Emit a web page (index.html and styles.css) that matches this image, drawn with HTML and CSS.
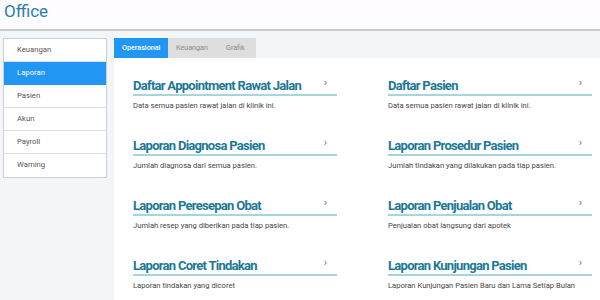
FILE: index.html
```html
<!DOCTYPE html>
<html>
<head>
<meta charset="utf-8">
<link rel="stylesheet" href="styles.css">
</head>
<body>
<header class="topbar"><h1 class="brand">Office</h1></header>
<div class="main">
  <nav class="sidebar">
    <div class="side-item">Keuangan</div>
    <div class="side-item active">Laporan</div>
    <div class="side-item">Pasien</div>
    <div class="side-item">Akun</div>
    <div class="side-item">Payroll</div>
    <div class="side-item">Warning</div>
  </nav>
  <section class="content">
    <div class="tabs">
      <div class="tab active">Operasional</div>
      <div class="tab">Keuangan</div>
      <div class="tab">Grafik</div>
    </div>
    <div class="panel">
      <div class="card"><div class="card-head"><span class="card-title">Daftar Appointment Rawat Jalan</span><span class="chev">›</span></div><p class="card-desc">Data semua pasien rawat jalan di klinik ini.</p></div>
      <div class="card"><div class="card-head"><span class="card-title">Daftar Pasien</span><span class="chev">›</span></div><p class="card-desc">Data semua pasien rawat jalan di klinik ini.</p></div>
      <div class="card"><div class="card-head"><span class="card-title">Laporan Diagnosa Pasien</span><span class="chev">›</span></div><p class="card-desc">Jumlah diagnosa dari semua pasien.</p></div>
      <div class="card"><div class="card-head"><span class="card-title">Laporan Prosedur Pasien</span><span class="chev">›</span></div><p class="card-desc">Jumlah tindakan yang dilakukan pada tiap pasien.</p></div>
      <div class="card"><div class="card-head"><span class="card-title">Laporan Peresepan Obat</span><span class="chev">›</span></div><p class="card-desc">Jumlah resep yang diberikan pada tiap pasien.</p></div>
      <div class="card"><div class="card-head"><span class="card-title">Laporan Penjualan Obat</span><span class="chev">›</span></div><p class="card-desc">Penjualan obat langsung dari apotek</p></div>
      <div class="card"><div class="card-head"><span class="card-title">Laporan Coret Tindakan</span><span class="chev">›</span></div><p class="card-desc">Laporan tindakan yang dicoret</p></div>
      <div class="card"><div class="card-head"><span class="card-title">Laporan Kunjungan Pasien</span><span class="chev">›</span></div><p class="card-desc">Laporan Kunjungan Pasien Baru dan Lama Setiap Bulan</p></div>
    </div>
  </section>
</div>
</body>
</html>
```
FILE: styles.css
```css
* { box-sizing: border-box; }
html, body { margin: 0; padding: 0; }
body {
  background: #f2f6f8;
  font-family: Roboto, "Noto Sans", sans-serif;
  width: 600px;
  height: 300px;
  overflow: hidden;
}
.topbar {
  height: 31px;
  background: #fefcfe;
  border-bottom: 2px solid #c9c9c9;
  padding: 0 4px;
}
.brand {
  margin: 0;
  font-size: 17px;
  font-weight: 400;
  line-height: 22px;
  color: #2b7db3;
}
.main {
  display: flex;
  align-items: flex-start;
  padding: 7px 0 0 3px;
}
.sidebar {
  width: 104px;
  background: #fff;
  border: 1px solid #cfcfcf;
  flex: none;
}
.side-item {
  height: 23px;
  line-height: 22px;
  padding-left: 13px;
  font-size: 7.7px;
  color: #555;
  border-bottom: 1px solid #e0e0e0;
}
.side-item:last-child { border-bottom: none; }
.side-item.active {
  background: #2196f3;
  color: #fff;
  border-bottom-color: #2196f3;
}
.content {
  margin-left: 7px;
  flex: 1;
}
.tabs {
  display: flex;
  height: 20px;
  width: 142px;
  background: #dedede;
}
.tab {
  font-size: 7.2px;
  color: #8a8a8a;
  line-height: 20px;
  padding: 0 7px;
}
.tab.active {
  background: #2196f3;
  color: #fff;
  font-weight: 500;
  width: 54px;
  padding-left: 8px;
}
.tab:nth-child(2) { width: 51px; padding-left: 8px; }
.tab:nth-child(3) { padding-left: 7px; }
.panel {
  background: #fff;
  height: 250px;
  padding: 18px 8px 0 19px;
  display: grid;
  grid-template-columns: 204px 204px;
  column-gap: 51px;
  row-gap: 24px;
  align-content: start;
}
.card { height: 36px; }
.card-head {
  display: flex;
  justify-content: space-between;
  align-items: flex-start;
  height: 20px;
  border-bottom: 2px solid #a7d5de;
}
.card-title {
  font-size: 13px;
  font-weight: 700;
  letter-spacing: -0.72px;
  line-height: 19px;
  color: #1b7896;
}
.chev {
  font-size: 11px;
  color: #777;
  line-height: 14px;
  margin-right: 10px;
}
.card-desc {
  margin: 4px 0 0;
  font-size: 7.6px;
  line-height: 12px;
  color: #444;
}
```
